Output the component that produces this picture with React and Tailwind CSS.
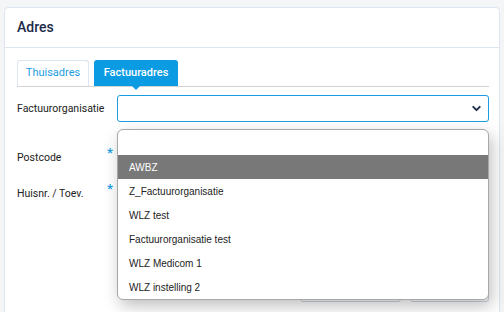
import { ChevronDown } from 'lucide-react';

const options = ['', 'AWBZ', 'Z_Factuurorganisatie', 'WLZ test', 'Factuurorganisatie test', 'WLZ Medicom 1', 'WLZ instelling 2'];

export default function App() {
  return (
    <div className="h-[312px] overflow-hidden bg-[#f4f5f7] px-1 pt-[7px]" style={{ fontFamily: 'Roboto, "Liberation Sans", Arial, sans-serif' }}>
      <div className="h-[320px] rounded-[4px] border border-[#dce5f0] bg-white">
        {/* Header */}
        <div className="flex h-[40px] items-center border-b border-[#dce5f0] px-[12px]">
          <h2 className="text-[14px] font-medium text-[#1b2a47]">Adres</h2>
        </div>

        <div className="pl-[12px] pr-[10px] pt-[12px]">
          {/* Tabs */}
          <div className="flex gap-[5px] border-b border-[#d2d2d2]">
            <div className="flex h-[26px] w-[72px] items-center justify-center rounded-t-[3px] border border-b-0 border-[#dce5f0] text-[11px] text-[#1a9de0]">
              Thuisadres
            </div>
            <div className="relative flex h-[26px] w-[84px] items-center justify-center rounded-t-[3px] bg-[#0a9be2] text-[11px] font-medium text-white">
              Factuuradres
              <span className="absolute -bottom-[4px] left-1/2 h-0 w-0 -translate-x-1/2 border-x-[4px] border-t-[4px] border-x-transparent border-t-[#0a9be2]" />
            </div>
          </div>

          {/* Form */}
          <div className="mt-[8px] flex flex-col">
            <div className="flex items-center">
              <label className="w-[100px] text-[10.5px] text-[#222]">Factuurorganisatie</label>
              <div className="relative flex-1">
                <div className="flex h-[27px] items-center justify-end rounded-[3px] border border-[#1a9de0] bg-white pr-[5px]">
                  <ChevronDown className="h-[13px] w-[13px] text-[#1b2a47]" strokeWidth={3.5} />
                </div>
                {/* Native dropdown popup */}
                <div
                  className="absolute left-0 top-[34px] z-10 w-full overflow-hidden rounded-[6px] border border-[#a7a7a7] bg-white pt-[1px] shadow-[3px_6px_16px_rgba(0,0,0,0.25)]"
                  style={{ fontFamily: '"Liberation Sans", Arial, sans-serif' }}
                >
                  {options.map((o, i) => (
                    <div
                      key={i}
                      className={`flex h-[24px] items-center px-[11px] text-[10px] ${o === 'AWBZ' ? 'bg-[#787878] text-white' : 'text-[#222]'}`}
                    >
                      {o}
                    </div>
                  ))}
                </div>
              </div>
            </div>

            <div className="mt-[22px] flex h-[27px] items-center">
              <label className="w-[90px] pt-[1px] text-[10.5px] text-[#222]">Postcode</label>
              <span className="-mt-[10px] w-[10px] text-[13px] font-bold leading-none text-[#1aa0e8]">*</span>
              <div className="h-[27px] flex-1 rounded-[3px] border border-[#dce5f0]" />
            </div>

            <div className="mt-[9px] flex h-[27px] items-center">
              <label className="w-[90px] pt-[1px] text-[10.5px] text-[#222]">Huisnr. / Toev.</label>
              <span className="-mt-[10px] w-[10px] text-[13px] font-bold leading-none text-[#1aa0e8]">*</span>
              <div className="h-[27px] flex-1 rounded-[3px] border border-[#dce5f0]" />
            </div>
          </div>

          {/* Buttons */}
          <div className="mt-[67px] flex justify-end gap-[9px]">
            <button className="h-[28px] w-[101px] rounded-[3px] border border-[#c9d4e1] bg-white" />
            <button className="h-[28px] w-[79px] rounded-[3px] border border-[#c9d4e1] bg-white" />
          </div>
        </div>
      </div>
    </div>
  );
}
